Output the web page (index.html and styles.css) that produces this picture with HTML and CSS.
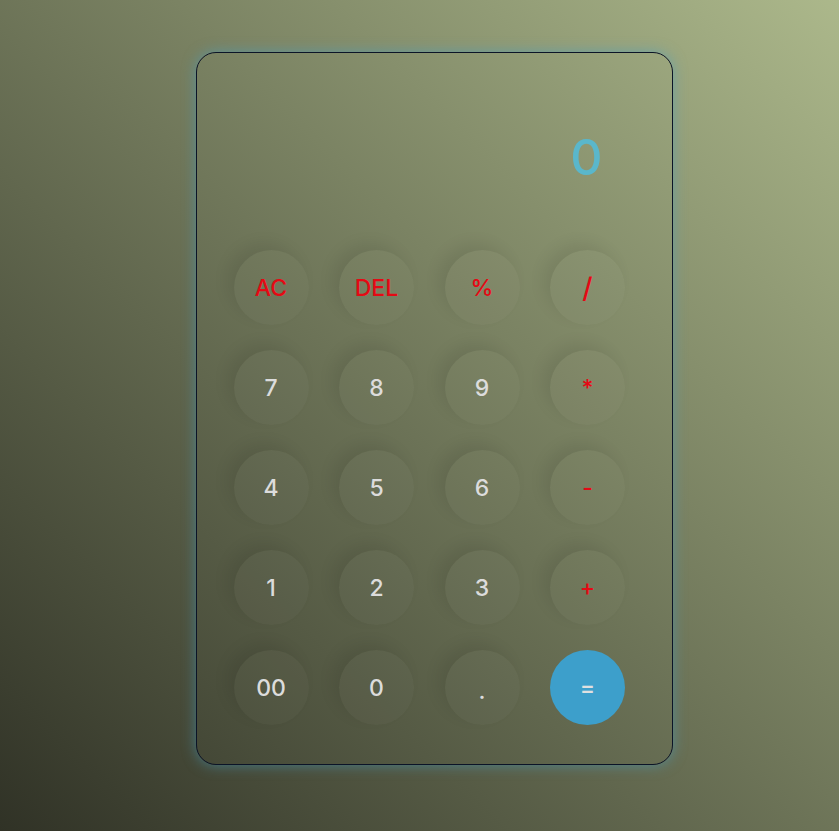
FILE: index.html
```html
<!DOCTYPE html>
<html lang="en">
<head>
<meta charset="UTF-8">
<title>Calculator</title>
<link rel="stylesheet" href="styles.css">
</head>
<body>
<div class="calculator">
  <div class="display">0</div>
  <div class="keys">
    <button class="key op">AC</button>
    <button class="key op">DEL</button>
    <button class="key op">%</button>
    <button class="key op slash">/</button>
    <button class="key">7</button>
    <button class="key">8</button>
    <button class="key">9</button>
    <button class="key op">*</button>
    <button class="key">4</button>
    <button class="key">5</button>
    <button class="key">6</button>
    <button class="key op">-</button>
    <button class="key">1</button>
    <button class="key">2</button>
    <button class="key">3</button>
    <button class="key op">+</button>
    <button class="key">00</button>
    <button class="key">0</button>
    <button class="key dot">.</button>
    <button class="key equal">=</button>
  </div>
</div>
</body>
</html>
```

FILE: styles.css
```css
* { box-sizing: border-box; }
html, body { height: 100%; }
body {
  margin: 0;
  background: linear-gradient(to top right, #303226, #acb88b);
  font-family: "Inter", "Lato", sans-serif;
  display: flex;
  justify-content: center;
  align-items: flex-start;
  padding-top: 52px;
}
.calculator {
  width: 477px;
  height: 713px;
  border: 1px solid #0b1427;
  border-radius: 20px;
  box-shadow: 0 0 14px rgba(70, 160, 200, 0.55);
  padding: 0 46px 39px 37px;
  display: flex;
  flex-direction: column;
  margin-left: 29px;
}
.display {
  height: 198px;
  display: flex;
  align-items: center;
  justify-content: flex-end;
  padding: 10px 23px 0 0;
  font-size: 50px;
  font-weight: 500;
  color: #5ab7cb;
}
.keys {
  display: grid;
  grid-template-columns: repeat(4, 75px);
  column-gap: 30.5px;
  row-gap: 25px;
}
.key {
  width: 75px;
  height: 75px;
  border: none;
  border-radius: 50%;
  background: rgba(255, 255, 255, 0.025);
  box-shadow: -7px -7px 15px rgba(0, 0, 0, 0.08);
  color: #dcdcdc;
  font-family: inherit;
  font-size: 23px;
  font-weight: 500;
  padding: 0;
  display: flex;
  align-items: center;
  justify-content: center;
}
.op { color: #e50914; }
.slash { font-size: 28px; }
.dot { padding-top: 6px; }
.equal {
  background: #3d9fcb;
  box-shadow: none;
  color: #e0e0e0;
}
```
